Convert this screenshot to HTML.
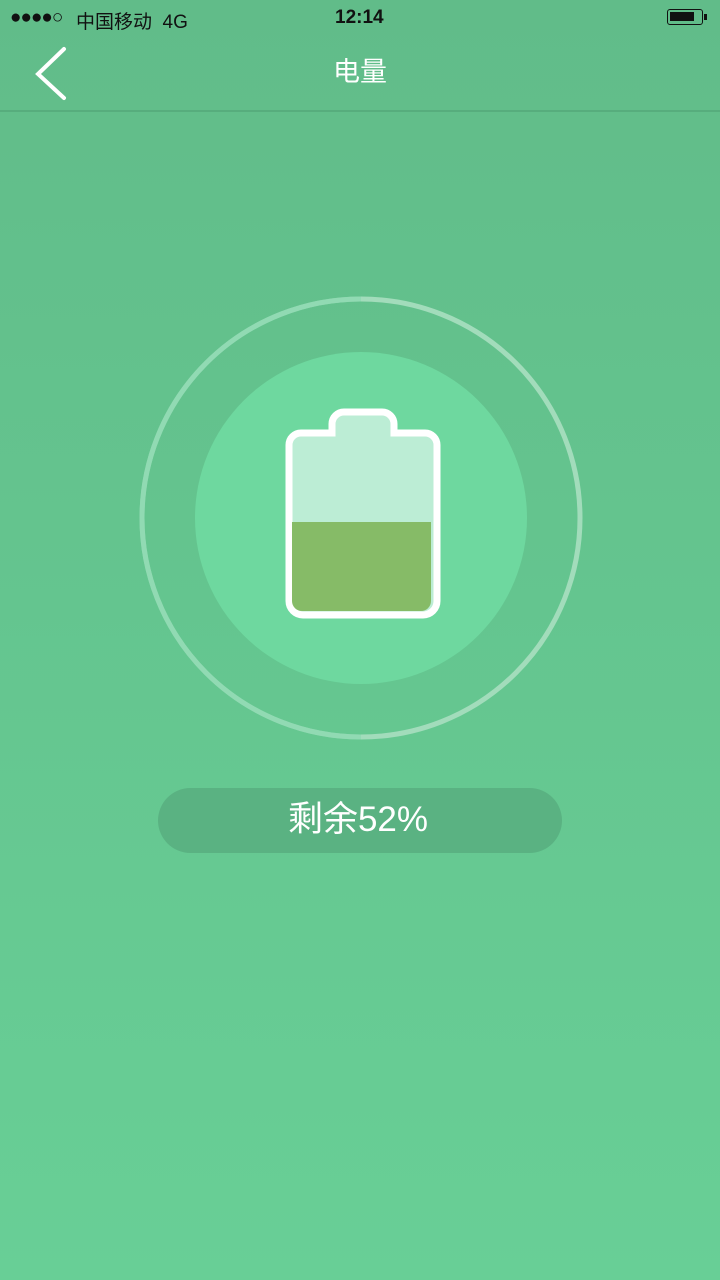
<!DOCTYPE html>
<html><head><meta charset="utf-8"><style>
body{margin:0;width:720px;height:1280px;overflow:hidden;background:linear-gradient(#61bc89,#68cf96);font-family:"Liberation Sans","Noto Sans CJK SC",sans-serif;position:relative}
.sb{position:absolute;top:0;left:0;width:720px;height:38px;font-size:19px;color:#111}
.nav{position:absolute;top:38px;left:0;width:720px;height:72px;border-bottom:2px solid #57ad7d}
.t{position:absolute;left:0;width:720px;text-align:center;top:12px;color:#fff;font-size:27px}
.pill{position:absolute;left:158px;top:788px;width:404px;height:65px;border-radius:33px;background:#5ab282;color:#fff;font-size:35px;text-align:center;line-height:63px;text-indent:-4px}
</style></head><body>
<div class="sb">
<span style="position:absolute;left:10px;top:7px;letter-spacing:-1px">●●●●○</span>
<span style="position:absolute;left:76px;top:7px">中国移动 &nbsp;4G</span>
<span style="position:absolute;left:335px;top:7px;font-weight:bold">12:14</span>
<div style="position:absolute;left:667px;top:9px;width:36px;height:16px;border:1.5px solid #111;border-radius:3px;box-sizing:border-box"><div style="margin:2px;width:24px;height:9px;background:#111"></div></div>
<div style="position:absolute;left:704px;top:14px;width:3px;height:6px;background:#111"></div>
</div>
<div class="nav">
<svg style="position:absolute;left:30px;top:8px" width="40" height="56"><path d="M34 3 L8 28 L34 52" stroke="#fff" stroke-width="4" fill="none" stroke-linecap="round"/></svg>
<div class="t">电量</div>
</div>
<svg style="position:absolute;left:0;top:0" width="720" height="800">
<circle cx="361" cy="518" r="219" fill="none" stroke="#a2dcbb" stroke-width="5"/>
<path d="M361 299 A219 219 0 0 0 142 518 A219 219 0 0 0 361 737" fill="none" stroke="#85d9ad" stroke-width="5" opacity=".6"/>
<circle cx="361" cy="518" r="166" fill="#6ed89f"/>
<path d="M344 412 h38 a12 12 0 0 1 12 12 v9 h31 a12 12 0 0 1 12 12 v156 a14 14 0 0 1 -14 14 h-120 a14 14 0 0 1 -14 -14 v-156 a12 12 0 0 1 12 -12 h31 v-9 a12 12 0 0 1 12 -12z" fill="#bcedd5" stroke="#fff" stroke-width="7"/>
<path d="M292 522 h139 v79 a10 10 0 0 1 -10 10 h-119 a10 10 0 0 1 -10 -10z" fill="#86bb67"/>
</svg>
<div class="pill">剩余52%</div>
</body></html>
